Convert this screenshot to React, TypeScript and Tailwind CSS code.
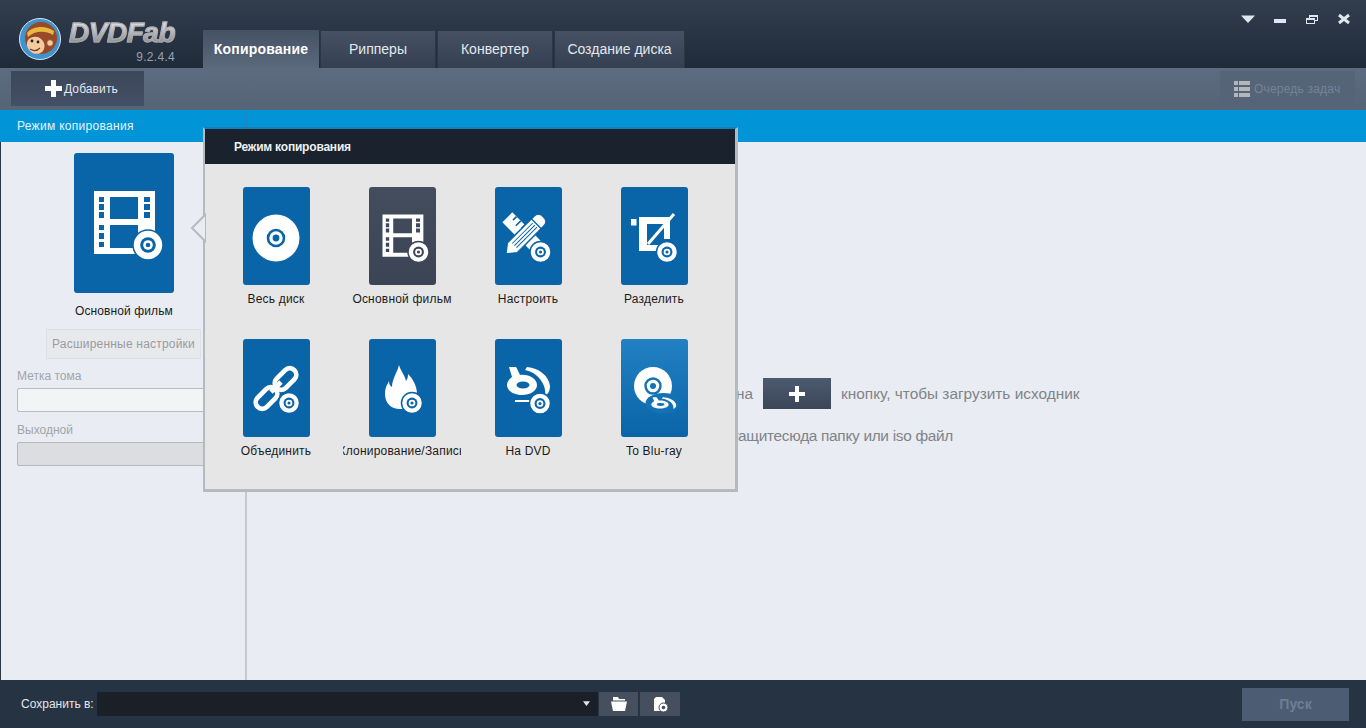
import React from "react";

const disc = (cx: number, cy: number, r: number, bg: string) => (
  <g>
    <circle cx={cx} cy={cy} r={r} fill="#fff" stroke={bg} strokeWidth={1.5} />
    <circle cx={cx} cy={cy} r={r * 0.52} fill={bg} />
    <circle cx={cx} cy={cy} r={r * 0.32} fill="#fff" />
    <circle cx={cx} cy={cy} r={r * 0.15} fill={bg} />
  </g>
);

const filmPath =
  "M0 0H61V63H0Z M5 6V11H10V6Z M5 13V19H10V13Z M5 21V27H10V21Z M5 34V39H10V34Z M5 42V48H10V42Z M5 51V56H10V51Z " +
  "M16 6V28H44V6Z M16 34V57H44V34Z " +
  "M50 6V11H56V6Z M50 13V19H56V13Z M50 21V27H56V21Z";

const Film = () => <path d={filmPath} fill="#fff" fillRule="evenodd" />;

const BluLogo = ({ bg }: { bg: string }) => (
  <g>
    <path d="M-13 -18H-6C-4 -15 -3 -12 -2 -10C7 -11 15 -6 15 0C15 6 8 10 0 10C-8 10 -15 6 -15 0C-15 -3 -13 -6 -10 -8Z" fill="#fff" />
    <ellipse cx={1} cy={0} rx={6.5} ry={3.5} fill={bg} />
    <path d="M5 -18C17 -17 27 -9 28 1C28 6 26 9 23 11C24 5 22 -1 18 -6C14 -11 9 -14 3 -15Z" fill="#fff" />
  </g>
);

const icons: Record<string, (bg: string) => React.ReactNode> = {
  whole: (bg) => (
    <g>
      <circle cx={33} cy={51} r={23.5} fill="#fff" />
      <circle cx={33} cy={51} r={8} fill="none" stroke={bg} strokeWidth={2.6} />
      <circle cx={33} cy={51} r={3.4} fill={bg} />
    </g>
  ),
  main: (bg) => (
    <g>
      <g transform="translate(13.5 27.5) scale(0.67)">
        <Film />
      </g>
      {disc(49.5, 65, 10.5, bg)}
    </g>
  ),
  custom: (bg) => (
    <g>
      <g transform="rotate(45 30 48)">
        <rect x={5} y={41} width={50} height={14} fill="#fff" />
        <path d="M11 41V46M17 41V48M23 41V46M29 41V48M35 41V46" stroke={bg} strokeWidth={1.6} />
      </g>
      <g transform="rotate(-45 30 48)">
        <path d="M3 48L12 41H50C54 41 56 44 56 48C56 52 54 55 50 55H12Z" fill="#fff" stroke={bg} strokeWidth={1.5} />
        <path d="M15 45H44M15 48H44M15 51H44" stroke={bg} strokeWidth={1} />
        <path d="M46 41V55" stroke={bg} strokeWidth={1.4} />
      </g>
      {disc(45.5, 65, 10.5, bg)}
    </g>
  ),
  split: (bg) => (
    <g>
      <rect x={10} y={32} width={5.5} height={6.5} fill="#fff" />
      <path d="M18 30H49V52H43V37H26V58H40V64H18Z" fill="#fff" />
      <path d="M27 57L53 27" stroke="#fff" strokeWidth={3} />
      {disc(46, 65, 10.5, bg)}
    </g>
  ),
  join: (bg) => (
    <g>
      <g fill="none" stroke="#fff" strokeWidth={4.8}>
        <rect x={30} y={33.5} width={25} height={13} rx={6.5} transform="rotate(-45 42.5 40)" />
        <rect x={11} y={52.5} width={25} height={13} rx={6.5} transform="rotate(-45 23.5 59)" />
      </g>
      <path d="M28 53L38 43" stroke="#fff" strokeWidth={4.8} />
      {disc(46, 64, 10.5, bg)}
    </g>
  ),
  burn: (bg) => (
    <g>
      <path
        d="M30 26C32 33 36 36 37 42C39 39 39 37 39 35C44 40 48 47 48 55C48 64 42 70 31 70C22 70 16 64 16 55C16 49 18 46 20 42C20 45 21 47 23 48C23 40 28 34 30 26Z"
        fill="#fff"
      />
      {disc(43, 64, 10.5, bg)}
    </g>
  ),
  dvd: (bg) => (
    <g>
      <g transform="translate(27 46)">
        <BluLogo bg={bg} />
      </g>
      <path d="M20 62H36" stroke="#fff" strokeWidth={2} />
      {disc(45, 64.5, 10.5, bg)}
    </g>
  ),
  blu: (bg) => (
    <g>
      <circle cx={32} cy={47} r={19} fill="#fff" />
      <circle cx={32} cy={47} r={7.5} fill="none" stroke={bg} strokeWidth={2.4} />
      <circle cx={32} cy={47} r={3} fill={bg} />
      <g transform="translate(39 65.5) scale(0.58 0.4)">
        <ellipse cx={6} cy={-3} rx={31} ry={26} fill={bg} />
        <BluLogo bg={bg} />
      </g>
    </g>
  ),
};

const modes = [
  { id: "whole", label: "Весь диск", card: "bg-[#0a64a8]", bg: "#0a64a8" },
  { id: "main", label: "Основной фильм", card: "bg-gradient-to-b from-[#434d5e] to-[#3a4454]", bg: "#3d4757" },
  { id: "custom", label: "Настроить", card: "bg-[#0a64a8]", bg: "#0a64a8" },
  { id: "split", label: "Разделить", card: "bg-[#0a64a8]", bg: "#0a64a8" },
  { id: "join", label: "Объединить", card: "bg-[#0a64a8]", bg: "#0a64a8" },
  { id: "burn", label: "Клонирование/Запись", card: "bg-[#0a64a8]", bg: "#0a64a8" },
  { id: "dvd", label: "На DVD", card: "bg-[#0a64a8]", bg: "#0a64a8" },
  { id: "blu", label: "To Blu-ray", card: "bg-gradient-to-b from-[#2181c2] to-[#0a64a8]", bg: "#1272b4" },
];

const tabs = ["Рипперы", "Конвертер", "Создание диска"];
const tabWidths = ["w-[116px]", "w-[116px]", "w-[131px]"];

const Monkey = () => (
  <svg width="42" height="42" viewBox="0 0 42 42" className="shrink-0">
    <circle cx="21" cy="21" r="20.5" fill="#3f93cf" stroke="#d5e6f2" strokeWidth="1" />
    <circle cx="22" cy="20" r="16" fill="#98492a" />
    <path d="M8 15C14 8 26 7 35 13L34 17C26 12 15 13 9 19Z" fill="#e8b93e" />
    <path d="M10 21C14 18 19 18 22 21C26 24 27 30 23 34C18 38 11 35 9 30C7 27 8 23 10 21Z" fill="#f3cb9f" />
    <circle cx="13" cy="23" r="1.4" fill="#2b1b10" />
    <circle cx="19" cy="24" r="1.4" fill="#2b1b10" />
    <path d="M11 31C14 33 18 33 21 30" fill="none" stroke="#7a3a1e" strokeWidth="1.2" />
    <circle cx="31" cy="25" r="3.4" fill="#f3cb9f" stroke="#8a4425" strokeWidth="1" />
  </svg>
);

export default function App() {
  return (
    <div className="relative flex h-[728px] w-[1366px] flex-col overflow-hidden bg-[#e9ecf2] font-['Liberation_Sans',Arial,sans-serif] text-xs">
      {/* title bar */}
      <div className="relative flex h-[68px] shrink-0 items-end bg-gradient-to-b from-[#323d4e] to-[#202b3a]">
        <div className="flex h-full w-[203px] shrink-0 pl-[19px] pt-[18px]">
          <Monkey />
          <div className="ml-[7px] flex w-[107px] flex-col items-end">
            <span className="bg-gradient-to-b from-[#f2f2f2] to-[#7d7f82] bg-clip-text text-[28px] leading-[29px] font-bold tracking-[-0.5px] text-transparent italic [-webkit-text-stroke:1px_#a9abae]">
              DVDFab
            </span>
            <span className="mt-[2px] text-xs leading-4 tracking-[0.3px] text-[#93a2b6]">9.2.4.4</span>
          </div>
        </div>
        <div className="flex h-[38px] w-[116px] items-center justify-center bg-gradient-to-b from-[#465264] to-[#5b697d] text-sm font-bold tracking-[0.2px] text-white">
          Копирование
        </div>
        {tabs.map((tab, i) => (
          <div
            key={tab}
            className={`ml-px flex h-[38px] items-center justify-center border-x border-t border-[#2c3645] bg-gradient-to-b from-[#465264] to-[#343f50] pb-[2px] text-sm text-[#e3e8ee] ${tabWidths[i]}`}
          >
            {tab}
          </div>
        ))}
        <div className="ml-auto mr-[15px] flex h-full items-start gap-[18px] pt-[12px]">
          <svg width="14" height="14" viewBox="0 0 14 14"><path d="M0 3.5H14L7 11Z" fill="#dfe6ee" /></svg>
          <svg width="14" height="14" viewBox="0 0 14 14"><rect x="1" y="7" width="12" height="4" fill="#dfe6ee" /></svg>
          <svg width="14" height="14" viewBox="0 0 14 14" fill="none" stroke="#dfe6ee" strokeWidth="1">
            <rect x="4.5" y="3.5" width="8" height="5" />
            <rect x="1.5" y="6.5" width="8" height="5" fill="#2b3647" />
            <path d="M2 7H9M5 4H12" strokeWidth="2" />
          </svg>
          <svg width="14" height="14" viewBox="0 0 14 14"><path d="M2 3L12 11M12 3L2 11" stroke="#dfe6ee" strokeWidth="3" /></svg>
        </div>
      </div>

      {/* toolbar */}
      <div className="flex h-[42px] shrink-0 items-center justify-between bg-gradient-to-b from-[#5c6b7f] to-[#566478] pl-[11px] pr-[11px] pb-[4px] pt-[3px]">
        <button className="flex h-[35px] w-[133px] items-center gap-[2px] bg-gradient-to-b from-[#3d475a] to-[#434f66] pl-[34px] text-xs tracking-[0.1px] text-[#e4e8ee]">
          <svg width="17" height="17" viewBox="0 0 17 17"><path d="M6 0H11V6H17V11H11V17H6V11H0V6H6Z" fill="#fff" /></svg>
          Добавить
        </button>
        <button className="flex h-[35px] w-[135px] items-center gap-[4px] bg-[#566478] pl-[14px] text-xs tracking-[0.2px] text-[#74839a]">
          <svg width="16" height="16" viewBox="0 0 16 16" fill="#b4b6ba">
            <rect y="0" width="4" height="4" /><rect x="5" y="0" width="11" height="4" />
            <rect y="6" width="4" height="4" /><rect x="5" y="6" width="11" height="4" />
            <rect y="12" width="4" height="4" /><rect x="5" y="12" width="11" height="4" />
          </svg>
          Очередь задач
        </button>
      </div>

      {/* section bar */}
      <div className="flex h-[32px] shrink-0 bg-[#0195d8]">
        <div className="flex w-[247px] items-center border-r border-[#1a87c0] pl-[17px] text-xs tracking-[0.3px] text-[#e6f4fb]">Режим копирования</div>
      </div>

      {/* body */}
      <div className="flex min-h-0 flex-1">
        <aside className="flex w-[247px] shrink-0 flex-col border-l border-[#2b3546] border-r-2 border-r-[#c6c9cd] pt-[11px]">
          <div className="ml-[73px] h-[140px] w-[100px] rounded-[3px] bg-[#0a64a8] pl-[20px] pt-[38px]">
            <svg width="76" height="78" viewBox="0 0 76 78">
              <Film />
              {disc(54, 54, 15, "#0a64a8")}
            </svg>
          </div>
          <div className="ml-[23px] mt-[10px] w-[200px] text-center text-xs leading-[16px] tracking-[0.1px] text-[#1b1b1b]">Основной фильм</div>
          <div className="ml-[45px] mt-[10px] flex h-[30px] w-[155px] items-center justify-center border border-[#dcdfe3] bg-[#e7e9ed] text-xs tracking-[0.2px] text-[#9a9c9f]">
            Расширенные настройки
          </div>
          <div className="ml-[16px] mt-[10px] text-xs leading-[15px] text-[#a2a5a9]">Метка тома</div>
          <div className="ml-[16px] mt-[4px] h-[24px] w-[212px] rounded-[2px] border border-[#b9bcc0] bg-[#f3f4f6]" />
          <div className="ml-[16px] mt-[11px] text-xs leading-[15px] text-[#a2a5a9]">Выходной</div>
          <div className="ml-[16px] mt-[4px] h-[24px] w-[212px] rounded-[2px] border border-[#b5b7ba] bg-[#dcdde0]" />
        </aside>
        <main className="flex flex-1 flex-col pt-[236px] text-[15.4px] text-[#7f8489]">
          <div className="flex h-[31px] items-center">
            <span className="mt-[1px] w-[506px] text-right whitespace-nowrap">Нажмите на</span>
            <span className="ml-[10px] flex h-[31px] w-[68px] items-center justify-center bg-gradient-to-b from-[#4c5a70] to-[#3b4657]">
              <svg width="16" height="16" viewBox="0 0 16 16"><path d="M6 0H10V6H16V10H10V16H6V10H0V6H6Z" fill="#fff" /></svg>
            </span>
            <span className="ml-[10px] mt-[1px] whitespace-nowrap">кнопку, чтобы загрузить исходник</span>
          </div>
          <div className="mt-[16px] w-[706px] text-right leading-[22px] tracking-[-0.3px] whitespace-nowrap">Или перетащитесюда папку или iso файл</div>
        </main>
      </div>

      {/* footer */}
      <div className="flex h-[48px] shrink-0 items-center bg-[#263342] pl-[21px] pr-[17px]">
        <span className="w-[76px] text-xs text-[#e2e6ea]">Сохранить в:</span>
        <div className="flex h-[24px] w-[501px] items-center justify-end bg-[#1b1f27] pr-[8px]">
          <svg width="7" height="6" viewBox="0 0 9 7"><path d="M0 0H9L4.5 6Z" fill="#e6e6e6" /></svg>
        </div>
        <button className="ml-[1px] flex h-[24px] w-[39px] items-center justify-center bg-[#454f5e]">
          <svg width="16" height="14" viewBox="0 0 16 14" fill="#fff">
            <path d="M2 0H7L8 2H14V3.5H2Z" />
            <path d="M0 4.5H16L14 14H2Z" />
          </svg>
        </button>
        <button className="ml-[2px] flex h-[24px] w-[40px] items-center justify-center bg-[#454f5e]">
          <svg width="15" height="15" viewBox="0 0 15 15">
            <path d="M3 0H9L12 3V14H1V2Z" fill="#fff" />
            <circle cx="10.5" cy="10.5" r="4.5" fill="#fff" stroke="#454f5e" strokeWidth="1" />
            <circle cx="10.5" cy="10.5" r="1.8" fill="#454f5e" />
          </svg>
        </button>
        <button className="ml-auto h-[33px] w-[107px] bg-[#4c5c72] text-sm font-bold text-[#6f7e94]">Пуск</button>
      </div>

      {/* copy mode popup */}
      <div className="absolute left-[203px] top-[127px] h-[365px] w-[535px] border-l-2 border-r-[3px] border-b-[3px] border-t-2 border-l-[#b7babd] border-r-[#b7babd] border-b-[#b7babd] border-t-[#137fb6] bg-[#e6e6e7]">
        <svg width="16" height="30" viewBox="0 0 16 30" className="absolute left-[-15px] top-[84px]">
          <path d="M16 1L2 15L16 29Z" fill="#e9ecf2" stroke="#b7babd" strokeWidth="2" />
        </svg>
        <div className="flex h-[35px] items-center bg-[#1a222d] pl-[29px] pt-[1px] text-xs font-bold tracking-[-0.2px] text-[#eef0f2]">Режим копирования</div>
        <div className="grid grid-cols-[repeat(4,118px)] grid-rows-[repeat(2,152px)] gap-x-[8px] pl-[12px] pt-[23px]">
          {modes.map((m) => (
            <div key={m.id} className="flex flex-col items-center">
              <div className={`h-[98px] w-[67px] rounded-[3px] ${m.card}`}>
                <svg width="67" height="98" viewBox="0 0 67 98">{icons[m.id](m.bg)}</svg>
              </div>
              <div className="mt-[6px] flex w-[118px] justify-center overflow-hidden text-xs leading-4 tracking-[0.2px] whitespace-nowrap text-[#1b1b1b]">{m.label}</div>
            </div>
          ))}
        </div>
      </div>
    </div>
  );
}
